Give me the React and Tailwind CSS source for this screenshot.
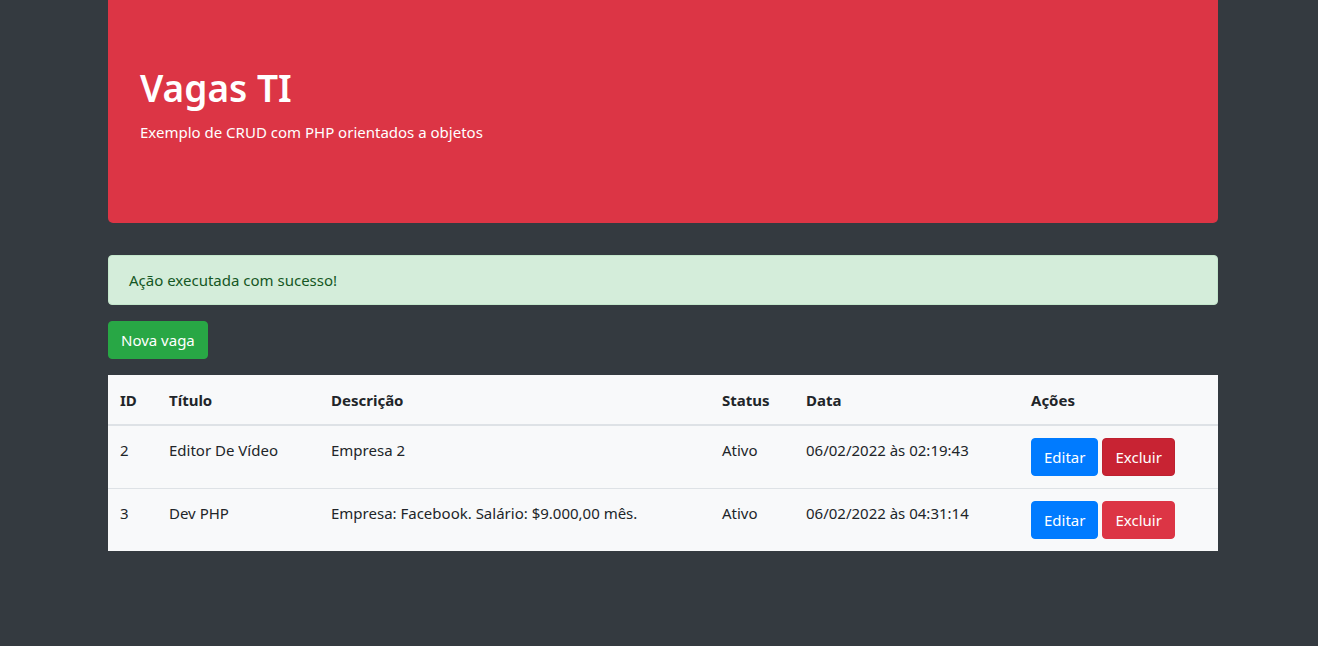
import React from 'react';

const vagas = [
  { id: 2, titulo: 'Editor De Vídeo', descricao: 'Empresa 2', status: 'Ativo', data: '06/02/2022 às 02:19:43', hover: true },
  { id: 3, titulo: 'Dev PHP', descricao: 'Empresa: Facebook. Salário: $9.000,00 mês.', status: 'Ativo', data: '06/02/2022 às 04:31:14' },
];

export default function App() {
  return (
    <div className="min-h-[646px] bg-[#343a40] text-[#212529] text-[15px] leading-6" style={{ fontFamily: '"Noto Sans", "Open Sans", sans-serif' }}>
      <div className="ml-[108px] w-[1110px]">
        {/* Jumbotron */}
        <section className="bg-[#dc3545] text-white rounded-b-[5px] px-8 pt-16 pb-[63px] mb-8">
          <h1 className="text-[37px] leading-[48px] font-semibold mb-2">Vagas TI</h1>
          <p className="mb-4">Exemplo de CRUD com PHP orientados a objetos</p>
        </section>

        {/* Alert */}
        <div className="bg-[#d4edda] text-[#155724] border border-[#c3e6cb] rounded-[4px] px-5 py-3 mb-4">
          Ação executada com sucesso!
        </div>

        <button className="bg-[#28a745] text-white rounded-[4px] px-3 py-[6px] leading-6 border border-[#28a745] mb-4">
          Nova vaga
        </button>

        {/* Table */}
        <table className="w-full bg-[#f8f9fa] border-collapse">
          <thead>
            <tr className="border-b-2 border-[#dee2e6] text-left">
              <th className="pt-[13px] pb-3 px-3 font-bold w-[49px]">ID</th>
              <th className="pt-[13px] pb-3 px-3 font-bold w-[162px]">Título</th>
              <th className="pt-[13px] pb-3 px-3 font-bold w-[391px]">Descrição</th>
              <th className="pt-[13px] pb-3 px-3 font-bold w-[84px]">Status</th>
              <th className="pt-[13px] pb-3 px-3 font-bold w-[225px]">Data</th>
              <th className="pt-[13px] pb-3 px-3 font-bold">Ações</th>
            </tr>
          </thead>
          <tbody>
            {vagas.map((v) => (
              <tr key={v.id} className="border-t border-[#dee2e6] align-top">
                <td className="p-3">{v.id}</td>
                <td className="p-3">{v.titulo}</td>
                <td className="p-3">{v.descricao}</td>
                <td className="p-3">{v.status}</td>
                <td className="p-3">{v.data}</td>
                <td className="p-3">
                  <div className="flex gap-1">
                    <button className="bg-[#007bff] text-white rounded-[4px] px-3 py-[6px] leading-6 border border-[#007bff]">Editar</button>
                    <button className={`${v.hover ? 'bg-[#c82333] border-[#bd2130]' : 'bg-[#dc3545] border-[#dc3545]'} text-white rounded-[4px] px-3 py-[6px] leading-6 border`}>Excluir</button>
                  </div>
                </td>
              </tr>
            ))}
          </tbody>
        </table>
      </div>
    </div>
  );
}
